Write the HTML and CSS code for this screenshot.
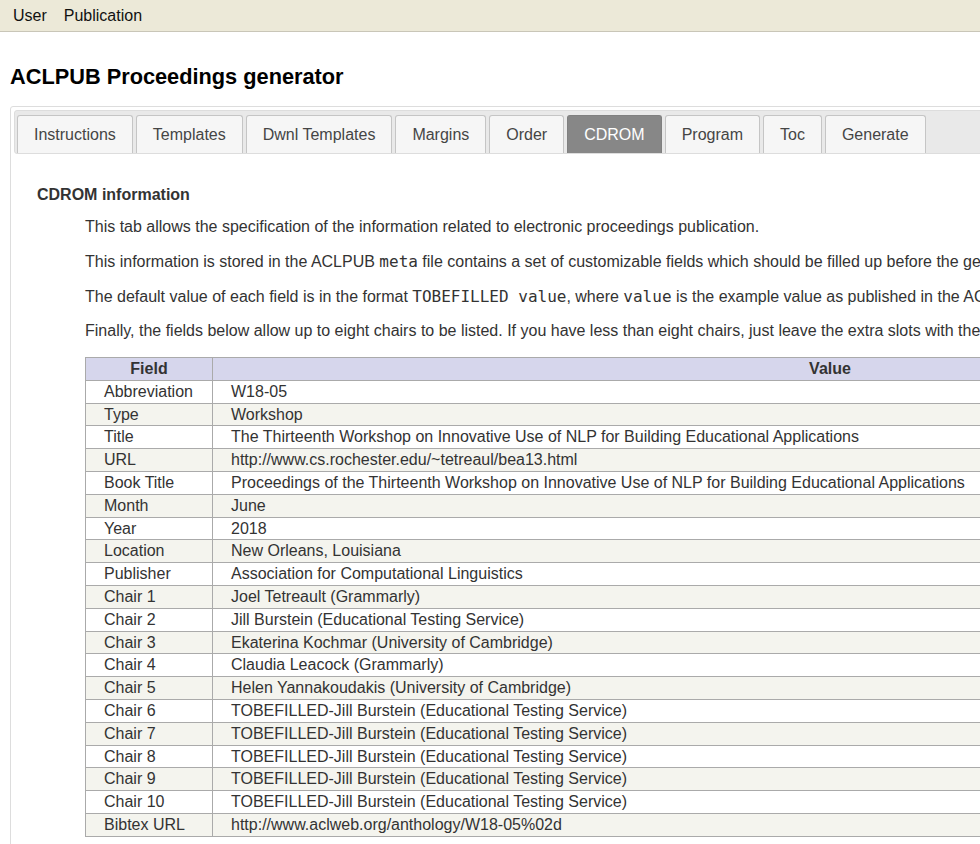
FILE: index.html
```html
<!DOCTYPE html>
<html>
<head>
<meta charset="utf-8">
<title>ACLPUB Proceedings generator</title>
<link rel="stylesheet" href="styles.css">
</head>
<body>
<div class="menubar">
  <span class="menu-item">User</span>
  <span class="menu-item">Publication</span>
</div>
<div class="page">
  <h1 class="title">ACLPUB Proceedings generator</h1>
  <div class="tabs">
    <ul class="tab-nav">
      <li class="tab">Instructions</li>
      <li class="tab">Templates</li>
      <li class="tab">Dwnl Templates</li>
      <li class="tab">Margins</li>
      <li class="tab">Order</li>
      <li class="tab active">CDROM</li>
      <li class="tab">Program</li>
      <li class="tab">Toc</li>
      <li class="tab">Generate</li>
    </ul>
    <div class="panel">
      <h3 class="section-title">CDROM information</h3>
      <div class="indent">
        <p>This tab allows the specification of the information related to electronic proceedings publication.</p>
        <p>This information is stored in the ACLPUB <code>meta</code> file contains a set of customizable fields which should be filled up before the generation of the proceedings.</p>
        <p>The default value of each field is in the format <code>TOBEFILLED value</code>, where <code>value</code> is the example value as published in the ACL Anthology.</p>
        <p>Finally, the fields below allow up to eight chairs to be listed. If you have less than eight chairs, just leave the extra slots with the default values.</p>
        <table class="meta-table">
          <thead>
            <tr><th class="col-field">Field</th><th class="col-value">Value</th></tr>
          </thead>
          <tbody>
            <tr><td>Abbreviation</td><td>W18-05</td></tr>
            <tr><td>Type</td><td>Workshop</td></tr>
            <tr><td>Title</td><td>The Thirteenth Workshop on Innovative Use of NLP for Building Educational Applications</td></tr>
            <tr><td>URL</td><td>http://www.cs.rochester.edu/~tetreaul/bea13.html</td></tr>
            <tr><td>Book Title</td><td>Proceedings of the Thirteenth Workshop on Innovative Use of NLP for Building Educational Applications</td></tr>
            <tr><td>Month</td><td>June</td></tr>
            <tr><td>Year</td><td>2018</td></tr>
            <tr><td>Location</td><td>New Orleans, Louisiana</td></tr>
            <tr><td>Publisher</td><td>Association for Computational Linguistics</td></tr>
            <tr><td>Chair 1</td><td>Joel Tetreault (Grammarly)</td></tr>
            <tr><td>Chair 2</td><td>Jill Burstein (Educational Testing Service)</td></tr>
            <tr><td>Chair 3</td><td>Ekaterina Kochmar (University of Cambridge)</td></tr>
            <tr><td>Chair 4</td><td>Claudia Leacock (Grammarly)</td></tr>
            <tr><td>Chair 5</td><td>Helen Yannakoudakis (University of Cambridge)</td></tr>
            <tr><td>Chair 6</td><td>TOBEFILLED-Jill Burstein (Educational Testing Service)</td></tr>
            <tr><td>Chair 7</td><td>TOBEFILLED-Jill Burstein (Educational Testing Service)</td></tr>
            <tr><td>Chair 8</td><td>TOBEFILLED-Jill Burstein (Educational Testing Service)</td></tr>
            <tr><td>Chair 9</td><td>TOBEFILLED-Jill Burstein (Educational Testing Service)</td></tr>
            <tr><td>Chair 10</td><td>TOBEFILLED-Jill Burstein (Educational Testing Service)</td></tr>
            <tr><td>Bibtex URL</td><td>http://www.aclweb.org/anthology/W18-05%02d</td></tr>
          </tbody>
        </table>
      </div>
    </div>
  </div>
</div>
</body>
</html>
```

FILE: styles.css
```css
html {
  overflow: hidden;
}
body {
  margin: 0;
  font-family: "Liberation Sans", Arial, sans-serif;
  font-size: 16px;
  color: #333;
  background: #fff;
}
.menubar {
  height: 31px;
  background: #ece9d8;
  border-bottom: 1px solid #c9c6b8;
  padding-left: 13px;
  display: flex;
  gap: 17px;
  align-items: center;
  width: 1600px;
}
.menu-item {
  color: #111;
  line-height: 28px;
}
.page {
  padding: 0 10px;
  width: 1560px;
}
.title {
  font-size: 21.75px;
  line-height: 26px;
  margin: 32px 0 16px;
  color: #000;
}
.tabs {
  border: 1px solid #ddd;
  border-radius: 3px;
  padding: 3px;
}
.tab-nav {
  list-style: none;
  margin: 0;
  padding: 4px 2px 0;
  background: #e9e9e9;
  border: 1px solid #ddd;
  border-radius: 3px;
  display: flex;
  gap: 3px;
}
.tab {
  height: 37px;
  line-height: 37px;
  padding: 0 16px;
  border: 1px solid #c5c5c5;
  border-bottom: 0;
  border-radius: 3px 3px 0 0;
  background: #f6f6f6;
  color: #454545;
}
.tab.active {
  background: #878787;
  border-color: #808080;
  color: #fff;
}
.panel {
  padding: 32px 23px 20px;
}
.section-title {
  font-size: 16px;
  line-height: 18.4px;
  margin: 0 0 14px;
  color: #333;
}
.indent {
  margin-left: 48px;
}
.indent p {
  margin: 0 0 16px;
  line-height: 18.67px;
  white-space: nowrap;
}
code {
  font-family: "DejaVu Sans Mono", monospace;
  font-size: 16px;
}
.meta-table {
  border-collapse: collapse;
  width: 1363px;
  color: #333;
}
.meta-table th,
.meta-table td {
  border: 1px solid #aaa;
  padding: 1px 18px;
  line-height: 19.8px;
  text-align: left;
  white-space: nowrap;
}
.meta-table th {
  background: #d6d6ec;
  text-align: center;
}
.col-field {
  width: 90px;
}
.meta-table tbody tr:nth-child(even) td {
  background: #f4f4ee;
}
```
